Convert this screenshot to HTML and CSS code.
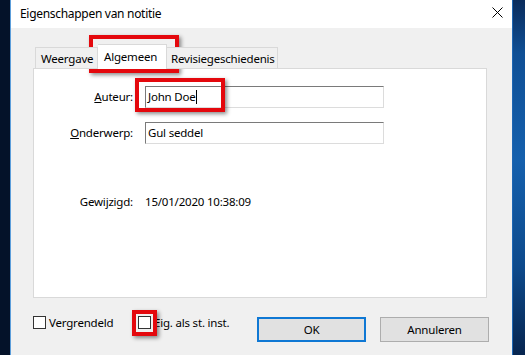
FILE: index.html
```html
<!DOCTYPE html>
<html lang="nl">
<head>
<meta charset="utf-8">
<title>Eigenschappen van notitie</title>
<link rel="stylesheet" href="styles.css">
</head>
<body>
<div class="page">
  <div class="desk-left"></div>
  <div class="window">
    <div class="titlebar">
      <span class="title">Eigenschappen van notitie</span>
      <svg class="close" width="11" height="11" viewBox="0 0 11 11"><path d="M0.5 0.5 L10.5 10.5 M10.5 0.5 L0.5 10.5" stroke="#000" stroke-width="1" fill="none"/></svg>
    </div>
    <div class="content">
      <div class="tabs">
        <div class="tab tab-w">Weergave</div>
        <div class="tab tab-a selected">Algemeen</div>
        <div class="tab tab-r">Revisiegeschiedenis</div>
      </div>
      <div class="panel">
        <div class="form">
          <label class="lbl"><u>A</u>uteur:</label>
          <div class="field">John Doe<span class="caret"></span></div>
          <label class="lbl"><u>O</u>nderwerp:</label>
          <div class="field">Gul seddel</div>
          <div class="lbl mod">Gewijzigd:</div>
          <div class="value mod">15/01/2020 10:38:09</div>
        </div>
      </div>
      <div class="bottom">
        <label class="check c1"><span class="box"></span>Vergrendeld</label>
        <label class="check c2"><span class="box"></span>Eig. als st. inst.</label>
        <button class="btn ok">OK</button>
        <button class="btn cancel">Annuleren</button>
      </div>
    </div>
  </div>
  <div class="desk-right"></div>
  <div class="hl hl-tab"></div>
  <div class="hl hl-field"></div>
  <div class="hl hl-check"></div>
</div>
</body>
</html>
```
FILE: styles.css
```css
html, body {
  margin: 0;
  padding: 0;
  width: 525px;
  height: 355px;
  overflow: hidden;
}
body {
  font-family: "Noto Sans", "Open Sans", sans-serif;
  font-size: 11.5px;
  letter-spacing: -0.2px;
  color: #000;
}
.page {
  position: relative;
  display: flex;
  width: 525px;
  height: 355px;
}
.desk-left {
  width: 10px;
  background: #041229;
}
.desk-right {
  flex: 1;
  background: linear-gradient(180deg, #0a2c5c 0%, #0f4f95 15%, #1560ad 45%, #0d4a8c 75%, #07254f 100%);
}
.window {
  width: 501px;
  border-left: 1px solid #5c9edb;
  border-right: 1px solid #1d66b3;
  background: #f0f0f0;
  display: flex;
  flex-direction: column;
}
.titlebar {
  height: 28px;
  background: #fff;
  display: flex;
  align-items: center;
  justify-content: space-between;
  padding: 0 9px 1px 9px;
  box-sizing: border-box;
}
.title {
  font-size: 12px;
  letter-spacing: -0.3px;
}
.close {
  display: block;
  margin-top: -2px;
}
.content {
  padding: 16px 0 0 22px;
  display: flex;
  flex-direction: column;
}
.tabs {
  display: flex;
  align-items: flex-end;
  height: 25px;
  padding-left: 2px;
  position: relative;
  z-index: 1;
  margin-bottom: -1px;
}
.tab {
  box-sizing: border-box;
  height: 22px;
  border: 1px solid #d9d9d9;
  background: #f0f0f0;
  padding: 3px 0 0 5px;
  line-height: 16px;
  white-space: nowrap;
}
.tab-w { width: 63px; }
.tab-a { width: 69px; padding-left: 6px; }
.tab-r { width: 111px; padding-left: 4px; border-left: none; }
.tab.selected {
  height: 25px;
  background: #fff;
  border-bottom: none;
  border-left: none;
  padding-top: 4px;
}
.panel {
  box-sizing: border-box;
  width: 454px;
  height: 230px;
  background: #fff;
  border: 1px solid #d9d9d9;
}
.form {
  display: grid;
  grid-template-columns: 99px 239px;
  column-gap: 12px;
  grid-template-rows: 22px 22px auto;
  row-gap: 14px;
  padding-top: 17px;
}
.lbl {
  text-align: right;
  align-self: center;
  line-height: 16px;
}
.field {
  box-sizing: border-box;
  height: 22px;
  border-top: 1px solid #7a7a7a;
  border-left: 1px solid #7a7a7a;
  border-right: 1px solid #dcdcdc;
  border-bottom: 1px solid #dcdcdc;
  padding: 2px 0 0 2px;
  line-height: 16px;
  display: flex;
  align-items: flex-start;
}
.caret {
  display: inline-block;
  width: 0;
  height: 14px;
  margin-top: 1px;
  border-left: 1px solid #000;
}
.mod {
  margin-top: 36px;
}
.value {
  align-self: center;
  line-height: 16px;
}
.bottom {
  display: flex;
  align-items: flex-start;
  margin-top: 18px;
}
.check {
  display: flex;
  align-items: center;
  line-height: 14px;
  height: 13px;
  white-space: nowrap;
}
.c1 { width: 105px; }
.c2 { width: 119px; }
.box {
  box-sizing: border-box;
  width: 13px;
  height: 13px;
  border: 1px solid #333;
  background: #fff;
  margin-right: 3px;
}
.btn {
  box-sizing: border-box;
  width: 109px;
  height: 25px;
  margin: 1px 0 0 0;
  background: #e1e1e1;
  border: 1px solid #adadad;
  font-family: "Noto Sans", "Open Sans", sans-serif;
  font-size: 11.5px;
  letter-spacing: -0.2px;
  color: #000;
  padding: 0;
}
.ok {
  border: 2px solid #0f78d4;
}
.cancel {
  margin-left: 14px;
}
.hl {
  position: absolute;
  box-sizing: border-box;
  border: 4px solid #e4080d;
  box-shadow: 2px 2px 4px rgba(0, 0, 0, 0.45);
}
.hl-tab {
  left: 89px;
  top: 35px;
  width: 90px;
  height: 38px;
}
.hl-field {
  left: 135px;
  top: 78px;
  width: 90px;
  height: 34px;
}
.hl-check {
  left: 132px;
  top: 310px;
  width: 25px;
  height: 26px;
}
```
